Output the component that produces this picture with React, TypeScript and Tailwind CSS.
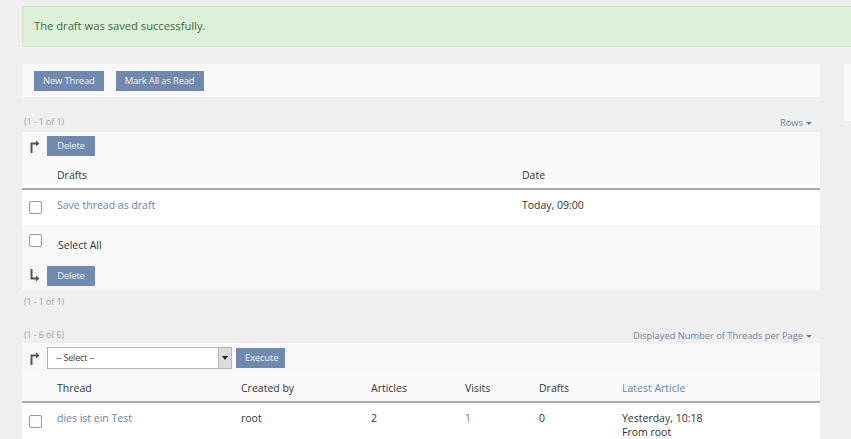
import { ReactNode } from "react";

type Thread = {
  title: string;
  createdBy: string;
  articles: number;
  visits: number;
  drafts: number;
  latest: string;
  latestBy: string;
};

const threads: Thread[] = [
  {
    title: "dies ist ein Test",
    createdBy: "root",
    articles: 2,
    visits: 1,
    drafts: 0,
    latest: "Yesterday, 10:18",
    latestBy: "From root",
  },
];

function ArrowIcon({ down = false }: { down?: boolean }) {
  // bent arrow next to the bulk actions, top one turns right from below, bottom one from above
  return (
    <svg width="10" height="13" viewBox="0 0 10 13" className="shrink-0 text-[#555]" aria-hidden="true">
      {down ? (
        <>
          <path d="M1.5 0 V9.5 H6" stroke="currentColor" strokeWidth="2" fill="none" />
          <path d="M6 6.5 L9.5 9.5 L6 12.5 Z" fill="currentColor" />
        </>
      ) : (
        <>
          <path d="M1.5 13 V3.5 H6" stroke="currentColor" strokeWidth="2" fill="none" />
          <path d="M6 0.5 L9.5 3.5 L6 6.5 Z" fill="currentColor" />
        </>
      )}
    </svg>
  );
}

function Button({ children, className = "" }: { children: ReactNode; className?: string }) {
  return (
    <button
      type="button"
      className={`h-5 bg-[#7189ae] px-[9px] text-[9.5px] leading-5 tracking-[-0.2px] text-[#eef1f6] ${className}`}
    >
      {children}
    </button>
  );
}

function Checkbox() {
  return <span className="block h-[13px] w-[13px] rounded-[2px] border border-[#9a9a9a] bg-[#fbfbfb]" />;
}

function Counter({ children, right }: { children: ReactNode; right?: ReactNode }) {
  return (
    <div className="flex h-[10px] items-center justify-between pl-[2px] pr-2 text-[8.7px] text-[#a0a0a0]">
      <span>{children}</span>
      {right ? (
        <span className="flex items-center gap-[3px] text-[9.3px] text-[#6683ad]">
          {right}
          <span className="mt-[1px] border-x-[3px] border-t-[3px] border-x-transparent border-t-[#6683ad]" />
        </span>
      ) : null}
    </div>
  );
}

export default function App() {
  return (
    <div
      className="h-[439px] w-[851px] overflow-hidden bg-[#efefef] text-[10.5px] text-[#333]"
      style={{ fontFamily: '"Open Sans", "Liberation Sans", sans-serif' }}
    >
      <div className="pl-[22px] pt-[6px]">
        <div className="flex h-[41px] w-[900px] items-center border border-[#d3e8c8] bg-[#dff0d8] pl-[11px] text-[11.2px] text-[#3d6b3a]">
          The draft was saved successfully.
        </div>
      </div>

      <div className="mt-[17px] flex gap-6 pl-[22px]">
        <main className="w-[798px] shrink-0">
          <div className="flex h-[33px] items-center gap-3 bg-[#f8f8f8] pl-3">
            <Button>New Thread</Button>
            <Button>Mark All as Read</Button>
          </div>

          <div className="mt-[21px]">
            <Counter right="Rows">(1 - 1 of 1)</Counter>
          </div>

          <section className="mt-[4px] bg-[#f8f8f8]">
            <div className="flex h-[28px] items-center gap-[7px] pl-2">
              <ArrowIcon />
              <Button className="w-12 px-0">Delete</Button>
            </div>
            <table className="w-full table-fixed border-collapse text-left">
              <colgroup>
                <col className="w-[35px]" />
                <col className="w-[465px]" />
                <col />
              </colgroup>
              <thead>
                <tr className="h-[29px] border-b-2 border-[#a9a9a9] bg-[#fafafa]">
                  <th />
                  <th className="pt-[3px] font-normal">Drafts</th>
                  <th className="pt-[3px] font-normal">Date</th>
                </tr>
              </thead>
              <tbody>
                <tr className="h-[36px] bg-white align-top">
                  <td className="pl-[7px] pt-[11px]">
                    <Checkbox />
                  </td>
                  <td className="pt-[8px] text-[#6683ad]">Save thread as draft</td>
                  <td className="pt-[8px]">Today, 09:00</td>
                </tr>
                <tr className="h-[31px] align-top">
                  <td className="pl-[7px] pt-[9px]">
                    <Checkbox />
                  </td>
                  <td className="pl-px pt-[13px]" colSpan={2}>
                    Select All
                  </td>
                </tr>
              </tbody>
            </table>
            <div className="flex h-[34px] items-center gap-[7px] pl-2 pt-[5px]">
              <ArrowIcon down />
              <Button className="w-12 px-0">Delete</Button>
            </div>
          </section>

          <div className="mt-[8px]">
            <Counter>(1 - 1 of 1)</Counter>
          </div>

          <div className="mt-[23px]">
            <Counter right="Displayed Number of Threads per Page">(1 - 6 of 6)</Counter>
          </div>

          <section className="mt-[2px] bg-[#f8f8f8]">
            <div className="flex h-[30px] items-center gap-[7px] pl-2">
              <ArrowIcon />
              <div className="flex items-center gap-1">
                <div className="flex h-[22px] w-[185px] items-center border border-[#b5b5b5] bg-white">
                  <span className="flex-1 pl-2 text-[9px] tracking-[-0.2px] text-[#444]">-- Select --</span>
                  <span className="flex h-full w-[13px] items-center justify-center border-l border-[#b5b5b5] bg-[#dcdcdc]">
                    <span className="border-x-[3px] border-t-[4px] border-x-transparent border-t-[#222]" />
                  </span>
                </div>
                <Button className="w-[49px] px-0">Execute</Button>
              </div>
            </div>
            <table className="w-full table-fixed border-collapse text-left">
              <colgroup>
                <col className="w-[35px]" />
                <col className="w-[184px]" />
                <col className="w-[130px]" />
                <col className="w-[94px]" />
                <col className="w-[74px]" />
                <col className="w-[83px]" />
                <col />
              </colgroup>
              <thead>
                <tr className="h-[29px] border-b-2 border-[#a9a9a9] bg-[#fafafa]">
                  <th />
                  <th className="pt-[3px] font-normal">Thread</th>
                  <th className="pt-[3px] font-normal">Created by</th>
                  <th className="pt-[3px] font-normal">Articles</th>
                  <th className="pt-[3px] font-normal">Visits</th>
                  <th className="pt-[3px] font-normal">Drafts</th>
                  <th className="pt-[3px] font-normal text-[#6683ad]">Latest Article</th>
                </tr>
              </thead>
              <tbody>
                {threads.map((thread) => (
                  <tr key={thread.title} className="h-[40px] bg-white align-top">
                    <td className="pl-[7px] pt-[12px]">
                      <Checkbox />
                    </td>
                    <td className="pt-[8px] text-[#6683ad]">{thread.title}</td>
                    <td className="pt-[8px]">{thread.createdBy}</td>
                    <td className="pt-[8px]">{thread.articles}</td>
                    <td className="pt-[8px] text-[#6683ad]">{thread.visits}</td>
                    <td className="pt-[8px]">{thread.drafts}</td>
                    <td className="pt-[8px] leading-[14px]">
                      {thread.latest}
                      <br />
                      {thread.latestBy}
                    </td>
                  </tr>
                ))}
              </tbody>
            </table>
          </section>
        </main>

        <aside className="h-[57px] w-[120px] shrink-0 bg-[#f8f8f8]" />
      </div>
    </div>
  );
}
